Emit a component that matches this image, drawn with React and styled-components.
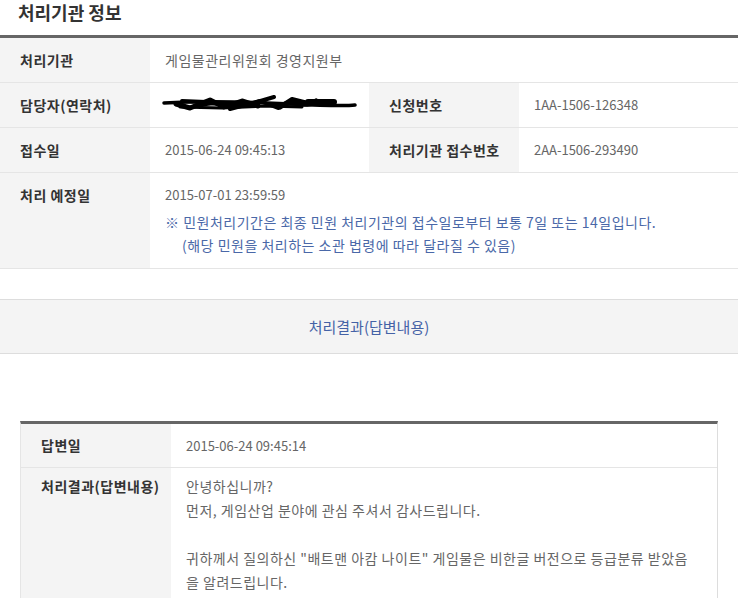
import React from "react"
import styled, { createGlobalStyle } from "styled-components"

const Global = createGlobalStyle`
	body {
		margin: 0;
		background: #fff;
		font-family: "Noto Sans CJK KR", "Noto Sans", sans-serif;
		font-size: 14px;
		letter-spacing: 0.5px;
		color: #666;
	}
`
const Page = styled.div`
	width: 738px;
`
const Title = styled.h3`
	margin: 0;
	padding: 0 18px;
	height: 35px;
	line-height: 24px;
	font-size: 18px;
	letter-spacing: 0;
	font-weight: bold;
	color: #333;
`
const InfoTable = styled.div`
	border-top: 3px solid #666;
`
const Row = styled.div`
	display: grid;
	grid-template-columns: ${p => p.$cols || "150px minmax(0, 1fr) 150px minmax(0, 1fr)"};
	border-bottom: 1px solid #e5e5e5;
`
const Label = styled.div`
	background: #f4f4f4;
	padding: ${p => p.$pad || "12px"} 20px;
	line-height: ${p => p.$lh || "20px"};
	font-weight: bold;
	color: #333;
	white-space: nowrap;
`
const Value = styled.div`
	grid-column: span ${p => p.$span || 1};
	padding: ${p => p.$pad || "12px 15px"};
	line-height: ${p => p.$lh || "20px"};
	color: #666;
	white-space: nowrap;
	${p => p.$num && "font-size: 13px; letter-spacing: 0;"}
`
const Num = styled.div`
	height: 20px;
	font-size: 13px;
	letter-spacing: 0;
`
const Note = styled.div`
	margin-top: 6px;
	line-height: 23px;
	color: #4a68a8;
`
const Indent = styled.span`
	padding-left: 17px;
`
const Scribble = styled.svg`
	display: block;
	margin: -2px 0 0 -3px;
`
const SectionBar = styled.div`
	margin-top: 30px;
	height: 53px;
	display: flex;
	align-items: center;
	justify-content: center;
	background: #f4f4f4;
	border-top: 1px solid #ddd;
	border-bottom: 1px solid #ddd;
	font-size: 15px;
	letter-spacing: 0;
	color: #4462a6;
`
const AnswerBox = styled.div`
	margin: 67px 20px 0;
	border-top: 3px solid #666;
	border-left: 1px solid #e5e5e5;
	border-right: 1px solid #ddd;
`
const Para = styled.div`
	min-height: 24px;
`

function Redacted() {
	return (
		<Scribble width="200" height="20" viewBox="0 0 200 20">
			<g stroke="#000" strokeLinecap="round" strokeLinejoin="round" fill="none">
				<path d="M2 10 C40 8 90 9 130 11 S185 13 193 12" strokeWidth="3.5" />
				<path d="M14 11 L28 15 L48 7 L62 14 L80 8 L96 13" strokeWidth="5" />
				<path d="M36 13 C52 6 74 16 95 9 L112 4" strokeWidth="4" />
				<path d="M68 16 L98 8 L116 15 L130 6 L150 11" strokeWidth="4" />
				<path d="M118 14 C130 4 142 17 154 8" strokeWidth="5" />
				<path d="M18 14 L60 15 L104 13 L140 14" strokeWidth="3" />
				<path d="M146 9 L172 9" strokeWidth="6" />
				<path d="M20 8 L44 9" strokeWidth="4" />
			</g>
		</Scribble>
	)
}

const answerLines = [
	"안녕하십니까?",
	"먼저, 게임산업 분야에 관심 주셔서 감사드립니다.",
	"",
	"귀하께서 질의하신 \"배트맨 아캄 나이트\" 게임물은 비한글 버전으로 등급분류 받았음",
	"을 알려드립니다.",
	"",
]

export default function App() {
	return (
		<Page>
			<Global />
			<Title>처리기관 정보</Title>
			<InfoTable>
				<Row>
					<Label>처리기관</Label>
					<Value $span={3}>게임물관리위원회 경영지원부</Value>
				</Row>
				<Row>
					<Label>담당자(연락처)</Label>
					<Value>
						<Redacted />
					</Value>
					<Label>신청번호</Label>
					<Value $num>1AA-1506-126348</Value>
				</Row>
				<Row>
					<Label>접수일</Label>
					<Value $num>2015-06-24 09:45:13</Value>
					<Label>처리기관 접수번호</Label>
					<Value $num>2AA-1506-293490</Value>
				</Row>
				<Row>
					<Label>처리 예정일</Label>
					<Value $span={3} $pad="12px 15px 11px">
						<Num>2015-07-01 23:59:59</Num>
						<Note>
							※ 민원처리기간은 최종 민원 처리기관의 접수일로부터 보통 7일 또는 14일입니다.
							<br />
							<Indent>(해당 민원을 처리하는 소관 법령에 따라 달라질 수 있음)</Indent>
						</Note>
					</Value>
				</Row>
			</InfoTable>
			<SectionBar>처리결과(답변내용)</SectionBar>
			<AnswerBox>
				<Row $cols="150px minmax(0, 1fr)">
					<Label $pad="9px" $lh="25px">답변일</Label>
					<Value $pad="9px 15px" $lh="25px" $num>2015-06-24 09:45:14</Value>
				</Row>
				<Row $cols="150px minmax(0, 1fr)">
					<Label $pad="6px" $lh="24px">처리결과(답변내용)</Label>
					<Value $pad="6px 15px" $lh="24px">
						{answerLines.map((line, i) => (
							<Para key={i}>{line}</Para>
						))}
					</Value>
				</Row>
			</AnswerBox>
		</Page>
	)
}
